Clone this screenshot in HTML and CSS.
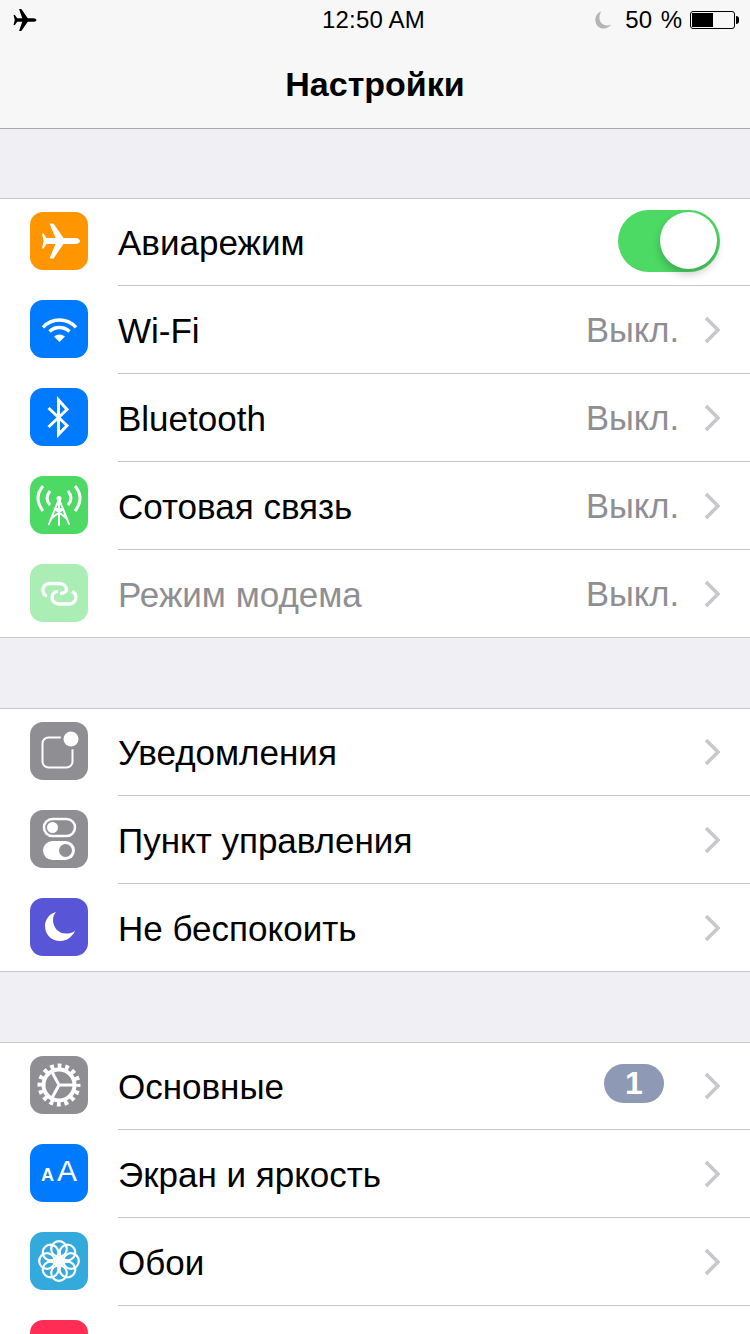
FILE: index.html
```html
<!DOCTYPE html>
<html lang="ru">
<head>
    <meta charset="UTF-8">
    <meta name="viewport" content="width=device-width, initial-scale=1.0">
    <title>Настройки</title>
    <link rel="stylesheet" href="styles.css">
</head>
<body>
    <svg class="defs" width="0" height="0">
        <symbol id="chev" viewBox="0 0 16 26">
            <path d="M2 1 L14 13 L2 25" fill="none" stroke="#c7c7cc" stroke-width="3.6"/>
        </symbol>
    </svg>

    <header class="top">
        <div class="status">
            <svg class="st-plane" viewBox="0 0 26 24">
                <path d="M22 10 H16 L9 0 H6.500 L10 10 H4.500 L2 6.500 H0.500 L1.800 12 L0.500 17.500 H2 L4.500 14 H10 L6.500 24 H9 L16 14 H22 C24 14 25.500 13 25.500 12 C25.500 11 24 10 22 10 Z"/>
            </svg>
            <span class="time">12:50 AM</span>
            <div class="st-right">
                <svg class="st-moon" viewBox="0 0 18 20">
                    <path d="M7 0.500 C2.500 2 0.500 6 0.500 10 C0.500 15.500 4.500 19.500 10 19.500 C13.500 19.500 16.500 17.500 18 15 C16.500 15.800 15 16 13.500 16 C8.500 16 5 12 5 7.500 C5 5 5.800 2.500 7 0.500 Z"/>
                </svg>
                <span class="batt-text">50 %</span>
                <div class="battery"><div class="batt-fill"></div></div>
            </div>
        </div>
        <h1>Настройки</h1>
    </header>

    <main>
        <section class="group">
            <div class="row">
                <div class="icon orange">
                    <svg viewBox="0 0 58 58"><path class="solid" d="M46 26 H33.500 L23.500 11.500 H19.500 L25.500 26 H16.500 L13.500 21.500 H12 L13.500 29 L12 36.500 H13.500 L16.500 32 H25.500 L19.500 46.500 H23.500 L33.500 32 H46 C48 32 50 30.500 50 29 C50 27.500 48 26 46 26 Z"/></svg>
                </div>
                <div class="row-body">
                    <span class="label">Авиарежим</span>
                    <div class="toggle"><div class="knob"></div></div>
                </div>
            </div>
            <div class="row">
                <div class="icon blue">
                    <svg viewBox="0 0 58 58">
                        <path class="line thick" d="M13 27.400 A22 22 0 0 1 46 27.400"/>
                        <path class="line thick" d="M19.500 31.500 A14.500 14.500 0 0 1 39.500 31.500"/>
                        <path class="solid" d="M29.500 42 L24 36.500 Q29.500 32.500 35 36.500 Z"/>
                    </svg>
                </div>
                <div class="row-body">
                    <span class="label">Wi-Fi</span>
                    <span class="value">Выкл.</span>
                    <svg class="chev"><use href="#chev"/></svg>
                </div>
            </div>
            <div class="row">
                <div class="icon blue">
                    <svg viewBox="0 0 58 58">
                        <path class="line mid" d="M18.500 20 L37 37.500 L28.500 46.500 V12 L37 21.500 L18.500 39"/>
                    </svg>
                </div>
                <div class="row-body">
                    <span class="label">Bluetooth</span>
                    <span class="value">Выкл.</span>
                    <svg class="chev"><use href="#chev"/></svg>
                </div>
            </div>
            <div class="row">
                <div class="icon green">
                    <svg viewBox="0 0 58 58">
                        <path class="line mid" d="M13 10 Q3 22 13 35"/>
                        <path class="line mid" d="M20 15 Q14 22.500 20 29"/>
                        <path class="line mid" d="M45 10 Q55 22 45 35"/>
                        <path class="line mid" d="M38 15 Q44 22.500 38 29"/>
                        <path class="line thin" d="M29 23 L19 48 M29 23 L39 48 M29 23 V49 M25 33 H33 M25 33 L36 42 M33 33 L22 42"/>
                        <circle class="solid" cx="29" cy="22.500" r="2.500"/>
                    </svg>
                </div>
                <div class="row-body">
                    <span class="label">Сотовая связь</span>
                    <span class="value">Выкл.</span>
                    <svg class="chev"><use href="#chev"/></svg>
                </div>
            </div>
            <div class="row last off">
                <div class="icon green">
                    <svg viewBox="0 0 58 58">
                        <path class="line thick" d="M17 32 C14 31 13 28 13 26 C13 22 16 19.500 20 19.500 H29 C33 19.500 36 22 36.500 25 C36.500 27.500 34 29.500 30 29.500"/>
                        <path class="line thick" d="M42 27.500 C45 29 46 31 46 33 C46 37 43 40 39 40 H29 C25 40 22 37 22 33.500 C22 29.500 25 27.500 28 27.500"/>
                    </svg>
                </div>
                <div class="row-body">
                    <span class="label">Режим модема</span>
                    <span class="value">Выкл.</span>
                    <svg class="chev"><use href="#chev"/></svg>
                </div>
            </div>
        </section>

        <section class="group">
            <div class="row">
                <div class="icon gray">
                    <svg viewBox="0 0 58 58">
                        <rect class="line thin" x="12.500" y="15.500" width="30" height="30" rx="6"/>
                        <circle cx="41" cy="17" r="10.500" fill="#8e8e93"/>
                        <circle class="solid" cx="41" cy="17" r="7.500"/>
                    </svg>
                </div>
                <div class="row-body">
                    <span class="label">Уведомления</span>
                    <svg class="chev"><use href="#chev"/></svg>
                </div>
            </div>
            <div class="row">
                <div class="icon gray">
                    <svg viewBox="0 0 58 58">
                        <rect class="line" x="14" y="9" width="31" height="17" rx="8.500"/>
                        <circle class="solid" cx="22.500" cy="17.500" r="5.500"/>
                        <rect class="solid" x="13" y="31" width="32" height="19" rx="9.500"/>
                        <circle cx="35.500" cy="40.500" r="6.500" fill="#8e8e93"/>
                    </svg>
                </div>
                <div class="row-body">
                    <span class="label">Пункт управления</span>
                    <svg class="chev"><use href="#chev"/></svg>
                </div>
            </div>
            <div class="row last">
                <div class="icon indigo">
                    <svg viewBox="0 0 58 58">
                        <path class="solid" d="M26 14 C18 16 15 23 15 28 C15 37 22 43 30 43 C37 43 42 39 45 33 C42 35 39 35.500 36 35.500 C28 35.500 23 29 23 22 C23 19 24 16 26 14 Z"/>
                    </svg>
                </div>
                <div class="row-body">
                    <span class="label">Не беспокоить</span>
                    <svg class="chev"><use href="#chev"/></svg>
                </div>
            </div>
        </section>

        <section class="group">
            <div class="row">
                <div class="icon gray">
                    <svg viewBox="0 0 58 58">
                        <circle class="teeth" cx="29" cy="29" r="19"/>
                        <circle class="gear-ring" cx="29" cy="29" r="15.500"/>
                        <path class="line mid" d="M29 29 H44 M29 29 L22 16 M29 29 L22 42"/>
                    </svg>
                </div>
                <div class="row-body">
                    <span class="label">Основные</span>
                    <span class="badge">1</span>
                    <svg class="chev"><use href="#chev"/></svg>
                </div>
            </div>
            <div class="row">
                <div class="icon blue aa">
                    <span class="aa-small">A</span><span class="aa-big">A</span>
                </div>
                <div class="row-body">
                    <span class="label">Экран и яркость</span>
                    <svg class="chev"><use href="#chev"/></svg>
                </div>
            </div>
            <div class="row">
                <div class="icon sky">
                    <svg viewBox="0 0 58 58">
                        <g class="petals">
                            <circle cx="29" cy="17" r="7.800"/>
                            <circle cx="29" cy="17" r="7.800" transform="rotate(45 29 29)"/>
                            <circle cx="29" cy="17" r="7.800" transform="rotate(90 29 29)"/>
                            <circle cx="29" cy="17" r="7.800" transform="rotate(135 29 29)"/>
                            <circle cx="29" cy="17" r="7.800" transform="rotate(180 29 29)"/>
                            <circle cx="29" cy="17" r="7.800" transform="rotate(225 29 29)"/>
                            <circle cx="29" cy="17" r="7.800" transform="rotate(270 29 29)"/>
                            <circle cx="29" cy="17" r="7.800" transform="rotate(315 29 29)"/>
                        </g>
                        <circle class="solid" cx="29" cy="29" r="3.500"/>
                    </svg>
                </div>
                <div class="row-body">
                    <span class="label">Обои</span>
                    <svg class="chev"><use href="#chev"/></svg>
                </div>
            </div>
            <div class="row">
                <div class="icon pink"></div>
                <div class="row-body"></div>
            </div>
        </section>
    </main>
</body>
</html>
```

FILE: styles.css
```css
html, body {
    margin: 0;
    padding: 0;
    height: 1334px;
    overflow: hidden;
}

body {
    font-family: 'Liberation Sans', Arial, sans-serif;
    background-color: #efeff4;
    color: #000000;
}

.defs {
    position: absolute;
}

/* top bar */
.top {
    height: 128px;
    background-color: #f7f7f7;
    border-bottom: 1px solid #a9a9ac;
}

.status {
    height: 40px;
    display: flex;
    align-items: center;
    padding: 0 15px 0 13px;
    font-size: 24px;
}

.st-plane {
    width: 24px;
    height: 22px;
    margin-right: 285px;
}

.time {
    flex: 1;
    letter-spacing: 0.2px;
}

.st-right {
    display: flex;
    align-items: center;
}

.st-moon {
    width: 18px;
    height: 18px;
    fill: #b5b5b5;
    margin-right: 13px;
}

.batt-text {
    margin-right: 8px;
    word-spacing: 2px;
}

.battery {
    position: relative;
    box-sizing: border-box;
    width: 45px;
    height: 18px;
    padding: 1px;
    border: 1px solid #000000;
    border-radius: 3px;
}

/* nub on the battery's right side */
.battery::after {
    content: '';
    position: absolute;
    right: -5px;
    top: 4px;
    width: 3px;
    height: 8px;
    background-color: #000000;
    border-radius: 0 3px 3px 0;
}

.batt-fill {
    width: 21px;
    height: 100%;
    background-color: #000000;
}

h1 {
    margin: 0;
    height: 88px;
    line-height: 88px;
    text-align: center;
    font-size: 34px;
    font-weight: 700;
}

/* setting groups */
.group {
    margin-top: 69px;
    background-color: #ffffff;
    border-top: 1px solid #c8c7cc;
}

.group + .group {
    margin-top: 70px;
}

.row {
    box-sizing: border-box;
    height: 88px;
    display: flex;
    padding-left: 30px;
}

.row:first-child {
    height: 87px;
}

.row.last {
    border-bottom: 1px solid #c8c7cc;
}

.icon {
    width: 58px;
    height: 58px;
    flex: none;
    margin: 14px 30px 0 0;
    border-radius: 13px;
}

.row:first-child .icon {
    margin-top: 13px;
}

.icon svg {
    display: block;
    width: 58px;
    height: 58px;
}

.orange { background-color: #ff9500; }
.blue { background-color: #007aff; }
.green { background-color: #4cd964; }
.gray { background-color: #8e8e93; }
.indigo { background-color: #5856d6; }
.sky { background-color: #34aadc; }
.pink { background-color: #ff2d55; }

.solid {
    fill: #ffffff;
}

.line {
    fill: none;
    stroke: #ffffff;
    stroke-width: 2.5;
    stroke-linecap: round;
}

.line.mid {
    stroke-width: 3;
    stroke-linecap: butt;
}

.line.thick {
    stroke-width: 3.4;
    stroke-linecap: butt;
}

.line.thin {
    stroke-width: 2;
}

.teeth {
    fill: none;
    stroke: #ffffff;
    stroke-width: 5;
    stroke-dasharray: 3.8 3.661;
    stroke-dashoffset: 1.9;
}

.gear-ring {
    fill: none;
    stroke: #ffffff;
    stroke-width: 4;
}

.petals circle {
    fill: none;
    stroke: #ffffff;
    stroke-width: 2.2;
}

.aa {
    display: flex;
    align-items: baseline;
    justify-content: center;
    line-height: 54px;
    color: #ffffff;
}

.aa-small {
    font-size: 18px;
    font-weight: 700;
    margin-right: 3px;
}

.aa-big {
    font-size: 30px;
}

.row-body {
    flex: 1;
    display: flex;
    align-items: center;
    padding-right: 30px;
    border-bottom: 1px solid #c8c7cc;
}

.row.last .row-body {
    border-bottom: none;
}

.label {
    flex: 1;
    font-size: 35px;
    padding-top: 2px;
}

.value {
    font-size: 34.5px;
    color: #8e8e93;
    margin-right: 25px;
    padding-top: 2px;
}

.off .icon {
    opacity: 0.47;
}

.off .label {
    color: #8e8e93;
}

.chev {
    width: 16px;
    height: 26px;
}

.toggle {
    position: relative;
    width: 102px;
    height: 62px;
    margin-bottom: 2px;
    border-radius: 31px;
    background-color: #4cd964;
}

.knob {
    position: absolute;
    top: 2px;
    right: 3px;
    width: 57px;
    height: 57px;
    border-radius: 50%;
    background-color: #ffffff;
    box-shadow: 0 5px 8px rgba(0, 0, 0, 0.22);
}

.badge {
    width: 60px;
    height: 39px;
    margin-right: 40px;
    margin-bottom: 5px;
    border-radius: 20px;
    background-color: #8e9ab5;
    color: #ffffff;
    font-size: 32px;
    font-weight: 700;
    line-height: 38px;
    text-align: center;
}
```
